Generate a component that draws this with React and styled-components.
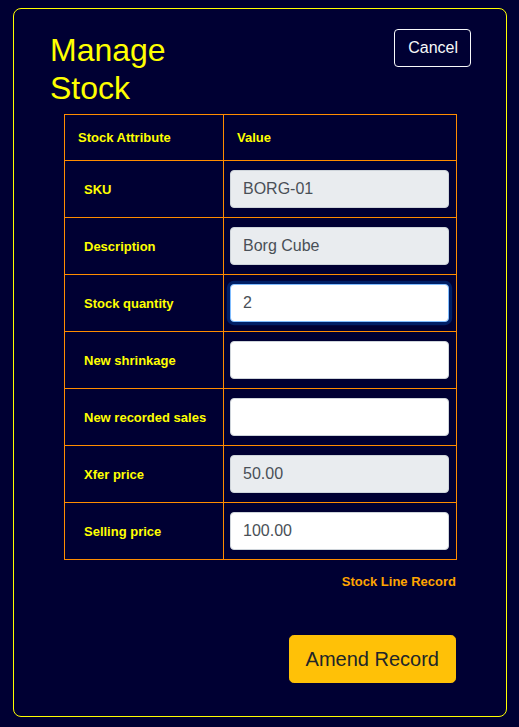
import React from "react";
import styled, { createGlobalStyle, css } from "styled-components";

const Global = createGlobalStyle`
  html, body {
    background: #000033;
  }
  body {
    margin: 8px;
    font-family: "Liberation Sans", Arial, sans-serif;
  }
  *, *::before, *::after { box-sizing: border-box; }
`;

const Panel = styled.div`
  width: 494px;
  margin-left: 5px;
  border: 1px solid #ffff00;
  border-radius: 8px;
  padding: 20px 0 33px;
  background: #000033;
`;

const Header = styled.div`
  display: flex;
  justify-content: space-between;
  align-items: flex-start;
  padding: 0 35px 0 36px;
`;

const Title = styled.h2`
  margin: 2px 0 6px;
  width: 160px;
  font-size: 32px;
  line-height: 1.2;
  font-weight: 400;
  color: #ffff00;
`;

const OutlineButton = styled.button`
  font-family: inherit;
  font-size: 16px;
  line-height: 1.5;
  padding: 6px 12px 6px 13px;
  color: #f8f9fa;
  background: transparent;
  border: 1px solid #f8f9fa;
  border-radius: 4px;
  cursor: pointer;
`;

const Body = styled.div`
  width: 392px;
  margin: 0 auto;
  display: flex;
  flex-direction: column;
`;

const Table = styled.table`
  width: 392px;
  border-collapse: collapse;
  table-layout: fixed;
`;

const Col = styled.col`
  width: ${(p) => p.$w}px;
`;

const HeadCell = styled.th`
  border: 1px solid #ff8c00;
  padding: 13px 13px;
  font-size: 13px;
  line-height: 19px;
  font-weight: 700;
  color: #ffff00;
  text-align: left;
`;

const LabelCell = styled.td`
  border: 1px solid #ff8c00;
  padding: 10px 8px 8px 19px;
  font-size: 13px;
  line-height: 19px;
  font-weight: 700;
  color: #ffff00;
  vertical-align: middle;
`;

const ValueCell = styled.td`
  border: 1px solid #ff8c00;
  padding: 9px 7px 9px 6px;
  vertical-align: middle;
`;

const Input = styled.input`
  display: block;
  width: 100%;
  height: 38px;
  padding: 6px 12px;
  font-family: "Liberation Sans", Arial, sans-serif;
  font-size: 16px;
  line-height: 1.5;
  color: #495057;
  caret-color: #212529;
  background: ${(p) => (p.readOnly ? "#e9ecef" : "#ffffff")};
  border: 1px solid #ced4da;
  border-radius: 4px;
  outline: none;
  ${(p) =>
    p.$focused &&
    css`
      border-color: #80bdff;
      box-shadow: 0 0 0 3.2px rgba(0, 123, 255, 0.25);
    `}
  &:focus {
    border-color: #80bdff;
    box-shadow: 0 0 0 3.2px rgba(0, 123, 255, 0.25);
  }
`;

const Caption = styled.div`
  padding: 12px 0;
  text-align: right;
  font-size: 13px;
  line-height: 19.5px;
  font-weight: 700;
  color: #ffa500;
`;

const Actions = styled.div`
  display: flex;
  justify-content: flex-end;
  margin-top: 31.5px;
`;

const PrimaryButton = styled.button`
  font-family: "Liberation Sans", Arial, sans-serif;
  font-size: 20px;
  line-height: 1.5;
  padding: 8px 16px;
  color: #212529;
  background: #ffc107;
  border: 1px solid #ffc107;
  border-radius: 4.8px;
  cursor: pointer;
`;

const rows = [
  { label: "SKU", value: "BORG-01", readOnly: true },
  { label: "Description", value: "Borg Cube", readOnly: true },
  { label: "Stock quantity", value: "2", focused: true },
  { label: "New shrinkage", value: "" },
  { label: "New recorded sales", value: "" },
  { label: "Xfer price", value: "50.00", readOnly: true },
  { label: "Selling price", value: "100.00" },
];

export default function App() {
  return (
    <>
      <Global />
      <Panel>
        <Header>
          <Title>Manage Stock</Title>
          <OutlineButton type="button">Cancel</OutlineButton>
        </Header>
        <Body>
          <Table>
            <colgroup>
              <Col $w={159} />
              <Col $w={233} />
            </colgroup>
            <thead>
              <tr>
                <HeadCell>Stock Attribute</HeadCell>
                <HeadCell>Value</HeadCell>
              </tr>
            </thead>
            <tbody>
              {rows.map((r) => (
                <tr key={r.label}>
                  <LabelCell>{r.label}</LabelCell>
                  <ValueCell>
                    <Input
                      type="text"
                      defaultValue={r.value}
                      readOnly={r.readOnly}
                      $focused={r.focused}
                      autoFocus={r.focused}
                    />
                  </ValueCell>
                </tr>
              ))}
            </tbody>
          </Table>
          <Caption>Stock Line Record</Caption>
          <Actions>
            <PrimaryButton type="button">Amend Record</PrimaryButton>
          </Actions>
        </Body>
      </Panel>
    </>
  );
}
